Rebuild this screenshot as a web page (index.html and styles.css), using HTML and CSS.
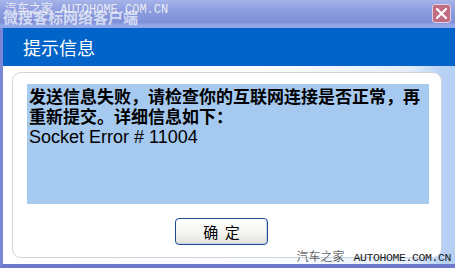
FILE: index.html
```html
<!DOCTYPE html>
<html lang="zh">
<head>
<meta charset="utf-8">
<link rel="stylesheet" href="styles.css">
</head>
<body>
<div class="window">
  <div class="titlebar">
    <span class="title">微搜客标网络客户端</span>
    <span class="wm-top">汽车之家 AUTOHOME.COM.CN</span>
    <span class="close">
      <svg width="13" height="13" viewBox="0 0 13 13"><path d="M2 2 L11 11 M11 2 L2 11" stroke="#fff" stroke-width="2.2" stroke-linecap="round"/></svg>
    </span>
  </div>
  <div class="header">提示信息</div>
  <div class="body">
    <div class="panel">
      <div class="message">
        <div class="cn">发送信息失败，请检查你的互联网连接是否正常，再重新提交。详细信息如下：</div>
        <div class="en">Socket Error # 11004</div>
      </div>
      <button class="ok">确 定</button>
    </div>
  </div>
  <span class="wm-bottom"><span class="wm-cn">汽车之家</span><span class="wm-en">AUTOHOME.COM.CN</span></span>
</div>
</body>
</html>
```

FILE: styles.css
```css
html, body {
  margin: 0;
  padding: 0;
  background: #ffffff;
}
body {
  width: 455px;
  height: 271px;
  overflow: hidden;
  font-family: "Noto Sans CJK SC", "Noto Sans", sans-serif;
}
.window {
  position: relative;
  width: 455px;
  height: 268px;
  display: flex;
  flex-direction: column;
  box-sizing: border-box;
  border-left: 3px solid #7a86d6;
  border-bottom: 4px solid #6c78cc;
}
.titlebar {
  position: relative;
  height: 28px;
  flex: none;
  display: flex;
  align-items: flex-start;
  justify-content: space-between;
  padding: 0 4px 0 3px;
  background: linear-gradient(to bottom, #a6b4ea 0%, #8c9cde 40%, #8090d8 80%, #94aaea 90%, #8ea6e8 100%);
  margin-left: -3px;
}
.title {
  color: #e8ecf8;
  font-weight: bold;
  font-size: 15px;
  line-height: 15px;
  margin-top: 9px;
  opacity: 0.8;
}
.wm-top {
  position: absolute;
  left: 5px;
  top: 4px;
  font-family: "Liberation Mono", "Noto Sans CJK SC", monospace;
  font-size: 12px;
  line-height: 12px;
  color: #f2f2f6;
  opacity: 0.9;
}
.close {
  width: 19px;
  height: 19px;
  margin-top: 4px;
  box-sizing: border-box;
  border: 1px solid #e6d0e0;
  border-radius: 3px;
  background: #c06c82;
  display: flex;
  align-items: center;
  justify-content: center;
}
.header {
  height: 38px;
  flex: none;
  background: #0264c8;
  color: #ffffff;
  font-size: 18px;
  line-height: 38px;
  padding-left: 20px;
  box-sizing: border-box;
}
.body {
  flex: 1;
  display: flex;
  padding: 6px 13px 6px 9px;
  background: linear-gradient(to right, #ffffff 0%, #fbfcfe 60%, #e4eefb 90%, #b8d2f4 97%, #b4d0f4 100%);
}
.panel {
  flex: 1;
  background: #ffffff;
  border: 1px solid #cfd4dc;
  border-radius: 9px;
  padding: 11px 12px 0 14px;
  display: flex;
  flex-direction: column;
  align-items: flex-start;
}
.message {
  align-self: stretch;
  height: 120px;
  background: #a6c9f0;
  padding: 2px 0 0 2px;
  box-sizing: border-box;
  color: #000000;
}
.cn {
  font-size: 17px;
  line-height: 20px;
  font-weight: bold;
  width: 395px;
}
.en {
  font-family: "Liberation Sans", Arial, sans-serif;
  font-size: 18px;
  line-height: 20px;
  margin-top: 1px;
}
.ok {
  margin: 14px 0 0 148px;
  width: 93px;
  height: 27px;
  border: 1px solid #1c4c96;
  border-radius: 4px;
  background: linear-gradient(to bottom, #ffffff 0%, #f4f4f0 60%, #e2e0da 100%);
  box-shadow: inset -1px -1px 0 #c8d4e8;
  font-family: "Noto Sans CJK SC", sans-serif;
  font-size: 15px;
  color: #000;
  padding: 0;
  line-height: 25px;
  word-spacing: 3px;
}
.wm-bottom {
  position: absolute;
  right: 4px;
  bottom: -1px;
  display: flex;
  align-items: baseline;
  gap: 9px;
  color: #1a1a1a;
  white-space: nowrap;
}
.wm-cn {
  font-family: "Noto Sans CJK SC", sans-serif;
  font-size: 12px;
  line-height: 14px;
  font-weight: 300;
}
.wm-en {
  font-family: "Liberation Mono", monospace;
  font-size: 11.5px;
  line-height: 14px;
  letter-spacing: -0.4px;
}
```
